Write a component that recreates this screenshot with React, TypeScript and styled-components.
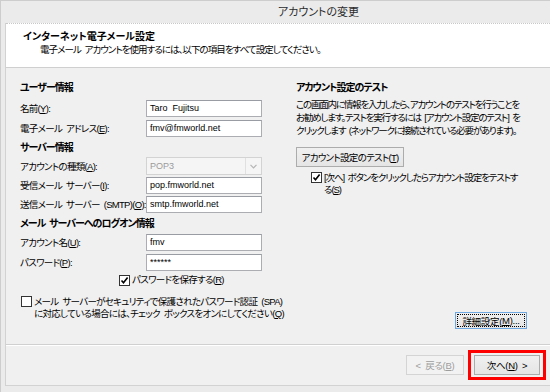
import styled, { createGlobalStyle } from 'styled-components'

const GlobalStyle = createGlobalStyle`
  html, body {
    margin: 0;
    padding: 0;
    background: #ebebeb;
  }
  body {
    font-family: "Liberation Sans", "Noto Sans CJK JP", sans-serif;
    font-size: 9.5px;
    letter-spacing: -0.7px;
    word-spacing: 2px;
    color: #000;
    font-feature-settings: 'palt';
    white-space: nowrap;
  }
`

const Window = styled.div`
  width: 550px;
  height: 392px;
  box-sizing: border-box;
  border-top: 1px solid #cdcdcd;
  border-left: 1px solid #cdcdcd;
  background: #ebebeb;
  display: flex;
  flex-direction: column;
  overflow: hidden;
`

const TitleBar = styled.div`
  height: 22px;
  line-height: 22px;
  padding-left: 86px;
  text-align: center;
  font-size: 11px;
  letter-spacing: 0;
  color: #2b2b2b;
`

const Frame = styled.div`
  flex: 1;
  min-height: 0;
  margin: 0 0 6px 4px;
  border-left: 1px solid #d2d2d2;
  border-bottom: 1px solid #d2d2d2;
  display: flex;
  flex-direction: column;
  background: #f0f0f0;
`

const Header = styled.div`
  height: 45px;
  flex: none;
  box-sizing: border-box;
  background: #fff;
  border-top: 1px dotted #c8c8c8;
  border-bottom: 1px solid #cfcfcf;
  padding: 6px 0 0 17px;
  line-height: 13px;
`

const HeaderTitle = styled.div`
  font-weight: bold;
  font-size: 10px;
  letter-spacing: 0;
`

const HeaderText = styled.div`
  padding-left: 17px;
  letter-spacing: -0.95px;
`

const Content = styled.div`
  flex: 1;
  min-height: 0;
  display: grid;
  grid-template-columns: 262px 1fr;
  column-gap: 14px;
  padding: 9px 23px 15px 14px;
  border-bottom: 1px solid #d0d0d0;
  box-shadow: 0 1px 0 #fff;
`

const Column = styled.div`
  display: flex;
  flex-direction: column;
  min-height: 0;
`

const Heading = styled.div<{ $h: number; $mt?: number }>`
  height: ${p => p.$h}px;
  margin-top: ${p => p.$mt ?? 0}px;
  display: flex;
  align-items: center;
  font-weight: bold;
  font-size: 10px;
  letter-spacing: -1px;
`

const Row = styled.div<{ $h: number; $mt?: number }>`
  height: ${p => p.$h}px;
  margin-top: ${p => p.$mt ?? 0}px;
  display: grid;
  grid-template-columns: 126px 116px;
  align-items: center;
`

const Key = styled.span`
  text-decoration: underline;
`

const TextBox = styled.div<{ $h?: number }>`
  height: ${p => p.$h ?? 17}px;
  box-sizing: border-box;
  border: 1px solid #abadb3;
  border-top-color: #9a9ca3;
  background: #fff;
  padding-left: 3px;
  display: flex;
  align-items: center;
  white-space: pre;
  font-size: 9px;
  letter-spacing: 0;
  word-spacing: 0;
`

const Combo = styled.div`
  height: 18px;
  box-sizing: border-box;
  border: 1px solid #d3d3d3;
  background: #f5f5f5;
  color: #9b9b9b;
  display: flex;
  align-items: center;
  padding-left: 3px;
  font-size: 9px;
  letter-spacing: 0;
`

const ComboValue = styled.span`
  flex: 1;
`

const ComboArrow = styled.span`
  width: 15px;
  height: 100%;
  border-left: 1px solid #e0e0e0;
  display: flex;
  align-items: center;
  justify-content: center;
`

const CheckRow = styled.div<{ $h?: number; $mt?: number; $indent: number; $tight?: boolean }>`
  ${p => (p.$h ? `height: ${p.$h}px;` : '')}
  margin-top: ${p => p.$mt ?? 0}px;
  padding-left: ${p => p.$indent}px;
  display: flex;
  align-items: ${p => (p.$h ? 'center' : 'flex-start')};
  line-height: 12px;
  ${p => (p.$tight ? 'letter-spacing: -1.1px;' : '')}
`

const Box = styled.span`
  flex: none;
  width: 11px;
  height: 11px;
  box-sizing: border-box;
  border: 1px solid #333;
  background: #fff;
  margin-right: 2px;
  display: flex;
  align-items: center;
  justify-content: center;
`

const Paragraph = styled.div`
  margin-top: 3px;
  line-height: 13px;
  letter-spacing: -1.2px;
`

const Button = styled.div<{ $w: number; $h?: number; $disabled?: boolean; $focused?: boolean }>`
  width: ${p => p.$w}px;
  height: ${p => p.$h ?? 20}px;
  flex: none;
  box-sizing: border-box;
  border: 1px solid ${p => (p.$disabled ? '#d4d4d4' : p.$focused ? '#6fa7e0' : '#acacac')};
  background: ${p => (p.$disabled ? '#f2f2f2' : 'linear-gradient(#f0f0f0, #e5e5e5)')};
  color: ${p => (p.$disabled ? '#9d9d9d' : '#000')};
  letter-spacing: -0.3px;
  display: flex;
  align-items: center;
  justify-content: center;
  ${p => (p.$focused ? 'outline: 1px dotted #000; outline-offset: -3px;' : '')}
`

const TestButton = styled(Button)`
  margin-top: 10px;
  letter-spacing: -0.7px;
`

const DetailButton = styled(Button)`
  margin-top: auto;
  align-self: flex-end;
`

const Footer = styled.div`
  height: 40px;
  flex: none;
  display: flex;
  align-items: center;
  justify-content: flex-end;
  gap: 4px;
  padding-right: 4px;
`

const Highlight = styled.div`
  border: 3px solid #f00;
  padding: 2px 3px;
`

function Check({ checked }: { checked: boolean }): JSX.Element {
  return (
    <Box>
      {checked && (
        <svg width="9" height="9" viewBox="0 0 9 9">
          <path d="M1.5 4.5 L3.5 6.8 L7.6 1.6" fill="none" stroke="#000" strokeWidth="1.6" />
        </svg>
      )}
    </Box>
  )
}

export default function App(): JSX.Element {
  return (
    <>
      <GlobalStyle />
      <Window>
        <TitleBar>アカウントの変更</TitleBar>
        <Frame>
          <Header>
            <HeaderTitle>インターネット電子メール設定</HeaderTitle>
            <HeaderText>電子メール アカウントを使用するには、以下の項目をすべて設定してください。</HeaderText>
          </Header>
          <Content>
            <Column>
              <Heading $h={18}>ユーザー情報</Heading>
              <Row $h={20} $mt={3}>
                <span>名前(<Key>Y</Key>):</span>
                <TextBox>Taro  Fujitsu</TextBox>
              </Row>
              <Row $h={20}>
                <span>電子メール アドレス(<Key>E</Key>):</span>
                <TextBox>fmv@fmworld.net</TextBox>
              </Row>
              <Heading $h={16}>サーバー情報</Heading>
              <Row $h={20} $mt={2}>
                <span>アカウントの種類(<Key>A</Key>):</span>
                <Combo>
                  <ComboValue>POP3</ComboValue>
                  <ComboArrow>
                    <svg width="7" height="5" viewBox="0 0 7 5">
                      <path d="M0.5 0.8 L3.5 3.8 L6.5 0.8" fill="none" stroke="#b5b5b5" strokeWidth="1.2" />
                    </svg>
                  </ComboArrow>
                </Combo>
              </Row>
              <Row $h={18}>
                <span>受信メール サーバー(<Key>I</Key>):</span>
                <TextBox>pop.fmworld.net</TextBox>
              </Row>
              <Row $h={18} $mt={1}>
                <span>送信メール サーバー (SMTP)(<Key>O</Key>):</span>
                <TextBox>smtp.fmworld.net</TextBox>
              </Row>
              <Heading $h={18}>メール サーバーへのログオン情報</Heading>
              <Row $h={20} $mt={1}>
                <span>アカウント名(<Key>U</Key>):</span>
                <TextBox>fmv</TextBox>
              </Row>
              <Row $h={20}>
                <span>パスワード(<Key>P</Key>):</span>
                <TextBox>******</TextBox>
              </Row>
              <CheckRow $h={16} $indent={99}>
                <Check checked />
                <span>パスワードを保存する(<Key>R</Key>)</span>
              </CheckRow>
              <CheckRow $mt={8} $indent={1}>
                <Check checked={false} />
                <span>
                  メール サーバーがセキュリティで保護されたパスワード認証 (SPA)
                  <br />
                  に対応している場合には、チェック ボックスをオンにしてください(<Key>Q</Key>)
                </span>
              </CheckRow>
            </Column>
            <Column>
              <Heading $h={18}>アカウント設定のテスト</Heading>
              <Paragraph>
                この画面内に情報を入力したら、アカウントのテストを行うことを
                <br />
                お勧めします。テストを実行するには [アカウント設定のテスト] を
                <br />
                クリックします (ネットワークに接続されている必要があります)。
              </Paragraph>
              <TestButton $w={108}>アカウント設定のテスト(<Key>T</Key>)</TestButton>
              <CheckRow $mt={5} $indent={15} $tight>
                <Check checked />
                <span>
                  [次へ] ボタンをクリックしたらアカウント設定をテストす
                  <br />
                  る(<Key>S</Key>)
                </span>
              </CheckRow>
              <DetailButton $w={72} $h={17} $focused>
                詳細設定(<Key>M</Key>)...
              </DetailButton>
            </Column>
          </Content>
          <Footer>
            <Button $w={58} $disabled>
              &lt; 戻る(<Key>B</Key>)
            </Button>
            <Highlight>
              <Button $w={66}>
                次へ(<Key>N</Key>) &gt;
              </Button>
            </Highlight>
          </Footer>
        </Frame>
      </Window>
    </>
  )
}
